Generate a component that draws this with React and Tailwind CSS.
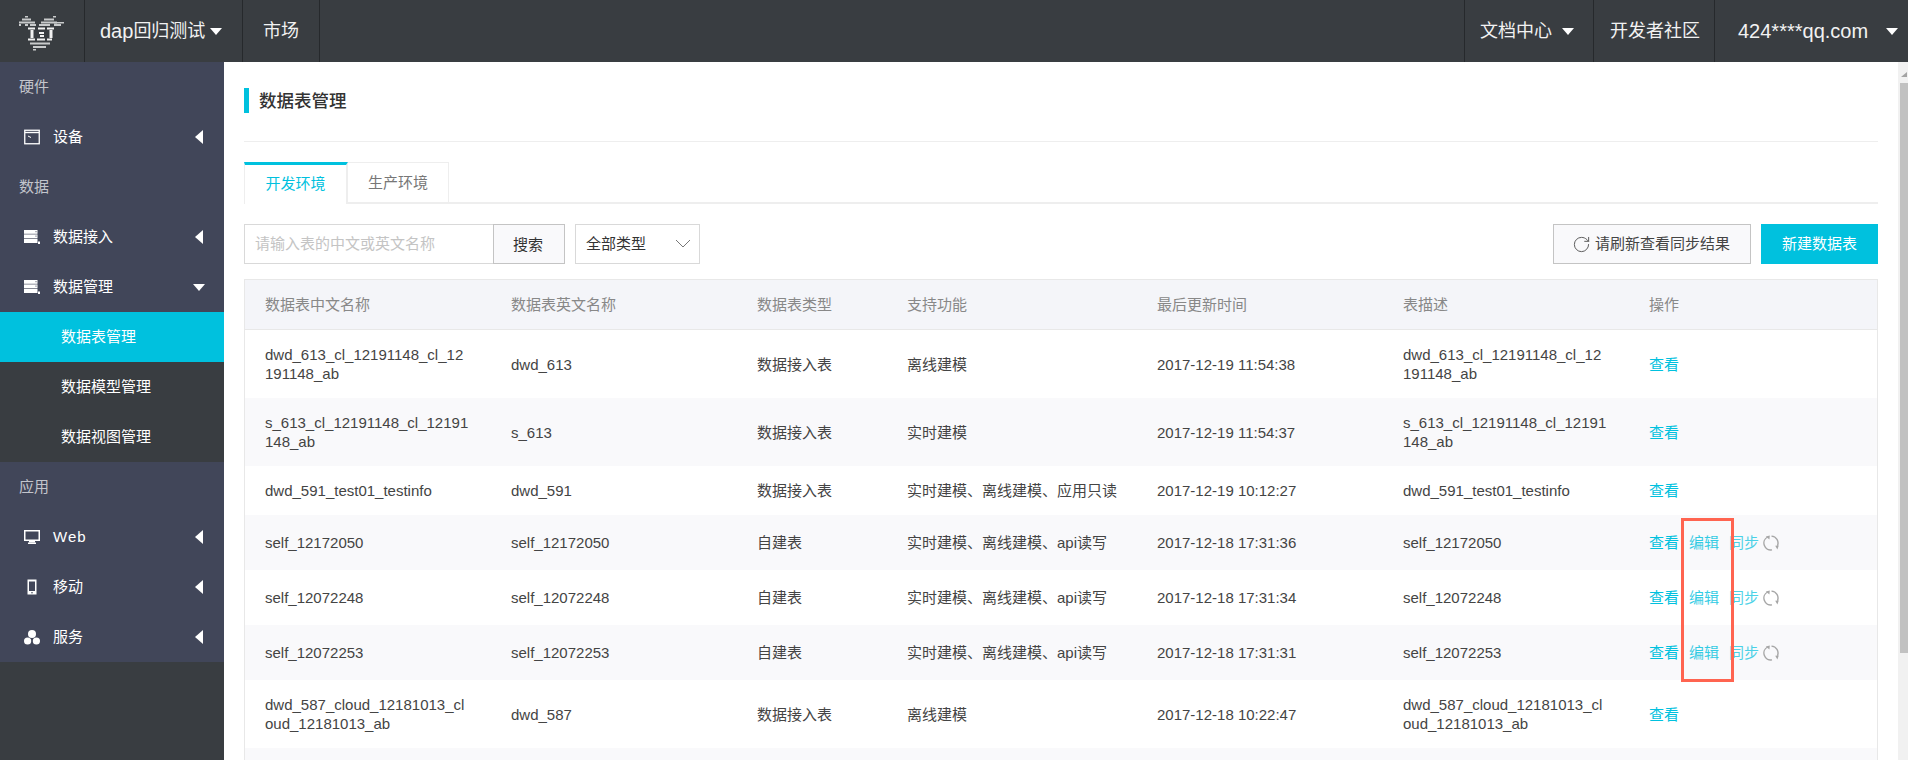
import React from "react";
import { RotateCw } from "lucide-react";

const FONT = "font-['Liberation_Sans','Noto_Sans_CJK_SC',sans-serif]";

const Logo = () => (
  <svg width="64" height="62" viewBox="0 0 64 62" fill="#c9cbcc">
    <rect x="25" y="16" width="3" height="1.5" />
    <rect x="53" y="16" width="3" height="1.5" />
    <rect x="22" y="18.5" width="9" height="2" />
    <rect x="44" y="18.5" width="10" height="2" />
    <rect x="19" y="21.5" width="16" height="2" />
    <rect x="41" y="21.5" width="16" height="2" />
    <rect x="54" y="22" width="10" height="1.5" />
    <rect x="19" y="24" width="2" height="2" />
    <rect x="25" y="24" width="3" height="2" />
    <rect x="30" y="24" width="6" height="2" />
    <rect x="39" y="24" width="11" height="2" />
    <rect x="54" y="24" width="7" height="2" />
    <rect x="28" y="27.5" width="7" height="2" fill="#f2f2f2" />
    <rect x="38" y="27.5" width="7" height="2" fill="#f2f2f2" />
    <rect x="47" y="27.5" width="7" height="2" fill="#f2f2f2" />
    <rect x="30.5" y="30" width="3" height="8" fill="#f2f2f2" />
    <rect x="39" y="32" width="5" height="2" fill="#f2f2f2" />
    <rect x="40" y="35" width="4" height="2" fill="#f2f2f2" />
    <rect x="49.5" y="30" width="3" height="8" fill="#f2f2f2" />
    <rect x="28" y="38.5" width="7" height="2" fill="#f2f2f2" />
    <rect x="37" y="38.5" width="8" height="2" fill="#f2f2f2" />
    <rect x="47" y="38.5" width="5" height="2" fill="#f2f2f2" />
    <rect x="30" y="42.5" width="20" height="2" />
    <rect x="33" y="46" width="13" height="2" />
    <rect x="33" y="49" width="3" height="1.5" />
  </svg>
);

const Caret = ({ className = "" }) => (
  <svg width="12" height="7" viewBox="0 0 12 7" className={className} fill="#fff">
    <polygon points="0,0 12,0 6,7" />
  </svg>
);

const LeftArrow = () => (
  <svg width="8" height="14" viewBox="0 0 8 14" className="absolute left-[195px] top-[18px]" fill="#fff">
    <polygon points="8,0 8,14 0,7" />
  </svg>
);

const WindowIcon = () => (
  <svg width="16" height="16" viewBox="0 0 16 16" fill="none" stroke="#fff">
    <rect x="0.75" y="1.25" width="14.5" height="13.5" strokeWidth="1.3" />
    <line x1="1" y1="3.5" x2="15" y2="3.5" strokeWidth="1.4" />
    <line x1="4" y1="7" x2="7" y2="8.5" strokeWidth="1" />
  </svg>
);

const TableIcon = () => (
  <svg width="16" height="14" viewBox="0 0 16 14" fill="#fff">
    <rect x="0" y="0" width="13.5" height="3.8" />
    <rect x="0" y="4.4" width="13.5" height="3.8" />
    <rect x="0" y="8.8" width="13.5" height="4.2" />
    <rect x="11.5" y="1.2" width="1" height="1" fill="#414659" />
    <rect x="11.5" y="5.6" width="1" height="1" fill="#414659" />
    <rect x="14" y="11.5" width="2" height="2.5" />
  </svg>
);

const MonitorIcon = () => (
  <svg width="16" height="14" viewBox="0 0 16 14" fill="#fff">
    <path fillRule="evenodd" d="M0 0h16v11H0zM1.5 1.5v8h13v-8z" />
    <rect x="5" y="11" width="6" height="1.5" />
    <rect x="4" y="12.5" width="8" height="1.5" />
  </svg>
);

const PhoneIcon = () => (
  <svg width="16" height="16" viewBox="0 0 16 16" fill="#fff">
    <path fillRule="evenodd" d="M3.5 0.5h9v15h-9zM5 2.5v9.5h6V2.5z" />
    <circle cx="8" cy="13.7" r="0.8" fill="#414659" />
  </svg>
);

const ServiceIcon = () => (
  <svg width="16" height="15" viewBox="0 0 16 15" fill="#fff">
    <circle cx="8" cy="4" r="4" />
    <circle cx="3.6" cy="11" r="3.6" />
    <circle cx="12.4" cy="11" r="3.6" />
  </svg>
);

const SyncIcon = () => (
  <svg width="16" height="16" viewBox="0 0 16 16" fill="none" stroke="#a6a6a6" strokeWidth="1.4">
    <path d="M4.6 2A6.9 6.9 0 0 0 9 14.9" />
    <path d="M8.5 1.1A6.9 6.9 0 0 1 14.4 10.8" />
    <polygon points="2.8,1.4 6.8,0.4 6.4,4.4" fill="#a6a6a6" stroke="none" />
    <polygon points="12.2,10.8 15.8,10.4 14.4,14.4" fill="#a6a6a6" stroke="none" />
  </svg>
);

const NavCell = ({ children, className = "" }) => (
  <div className={`h-full flex items-center border-r border-[#26292c] text-[18px] text-[#f2f2f2] ${className}`}>{children}</div>
);

const SectionLabel = ({ children }) => (
  <div className="h-[50px] pl-[19px] flex items-center text-[15px] text-[#c3c5cc]">{children}</div>
);

const MenuItem = ({ icon, label, open }) => (
  <div className="relative h-[50px] flex items-center text-[15px] text-white">
    <div className="w-[53px] pl-[24px] flex items-center">{icon}</div>
    <span>{label}</span>
    {open ? <Caret className="absolute left-[193px] top-[22px]" /> : <LeftArrow />}
  </div>
);

const SubItem = ({ label, active }) => (
  <div className={`h-[50px] pl-[61px] flex items-center text-[15px] text-white ${active ? "bg-[#00c1de]" : ""}`}>{label}</div>
);

const Sidebar = () => (
  <aside className="w-[224px] shrink-0 bg-[#393d41]">
    <div className="bg-[#414659]">
      <SectionLabel>硬件</SectionLabel>
      <MenuItem icon={<WindowIcon />} label="设备" />
      <SectionLabel>数据</SectionLabel>
      <MenuItem icon={<TableIcon />} label="数据接入" />
      <MenuItem icon={<TableIcon />} label="数据管理" open />
    </div>
    <SubItem label="数据表管理" active />
    <SubItem label="数据模型管理" />
    <SubItem label="数据视图管理" />
    <div className="bg-[#414659]">
      <SectionLabel>应用</SectionLabel>
      <MenuItem icon={<MonitorIcon />} label={<span className="tracking-[1px]">Web</span>} />
      <MenuItem icon={<PhoneIcon />} label="移动" />
      <MenuItem icon={<ServiceIcon />} label="服务" />
    </div>
  </aside>
);

const COLS = ["数据表中文名称", "数据表英文名称", "数据表类型", "支持功能", "最后更新时间", "表描述", "操作"];

const ROWS = [
  { h: "h-[68px]", name: "dwd_613_cl_12191148_cl_12191148_ab", en: "dwd_613", type: "数据接入表", fn: "离线建模", time: "2017-12-19 11:54:38", desc: "dwd_613_cl_12191148_cl_12191148_ab" },
  { h: "h-[68px]", name: "s_613_cl_12191148_cl_12191148_ab", en: "s_613", type: "数据接入表", fn: "实时建模", time: "2017-12-19 11:54:37", desc: "s_613_cl_12191148_cl_12191148_ab" },
  { h: "h-[49px]", name: "dwd_591_test01_testinfo", en: "dwd_591", type: "数据接入表", fn: "实时建模、离线建模、应用只读", time: "2017-12-19 10:12:27", desc: "dwd_591_test01_testinfo" },
  { h: "h-[55px]", name: "self_12172050", en: "self_12172050", type: "自建表", fn: "实时建模、离线建模、api读写", time: "2017-12-18 17:31:36", desc: "self_12172050", edit: true },
  { h: "h-[55px]", name: "self_12072248", en: "self_12072248", type: "自建表", fn: "实时建模、离线建模、api读写", time: "2017-12-18 17:31:34", desc: "self_12072248", edit: true },
  { h: "h-[55px]", name: "self_12072253", en: "self_12072253", type: "自建表", fn: "实时建模、离线建模、api读写", time: "2017-12-18 17:31:31", desc: "self_12072253", edit: true },
  { h: "h-[68px]", name: "dwd_587_cloud_12181013_cloud_12181013_ab", en: "dwd_587", type: "数据接入表", fn: "离线建模", time: "2017-12-18 10:22:47", desc: "dwd_587_cloud_12181013_cloud_12181013_ab" },
  { h: "h-[68px]", name: "", en: "", type: "", fn: "", time: "", desc: "", empty: true },
];

const GRID = "grid grid-cols-[246px_246px_150px_250px_246px_246px_1fr] items-center";

const Actions = ({ row }) => {
  if (row.empty) return null;
  return (
    <div className="flex items-center text-[#00c1de]">
      <span>查看</span>
      {row.edit && (
        <>
          <span className="ml-[10px] opacity-80">编辑</span>
          <span className="ml-[10px] opacity-70">同步</span>
          <span className="ml-[4px]"><SyncIcon /></span>
        </>
      )}
    </div>
  );
};

const DataTable = () => (
  <div className="border-x border-[#e8e8e8] text-[15px] leading-[19px]">
    <div className={`${GRID} h-[51px] bg-[#f4f5f9] border-y border-[#e8e8e8] text-[#888] pl-[20px]`}>
      {COLS.map((c) => (
        <div key={c}>{c}</div>
      ))}
    </div>
    {ROWS.map((r, i) => (
      <div key={i} className={`${GRID} ${r.h} pl-[20px] text-[#444] ${i % 2 === 1 ? "bg-[#f9f9fb]" : "bg-white"}`}>
        <div className="w-[205px] break-all">{r.name}</div>
        <div>{r.en}</div>
        <div>{r.type}</div>
        <div>{r.fn}</div>
        <div>{r.time}</div>
        <div className="w-[205px] break-all">{r.desc}</div>
        <Actions row={r} />
      </div>
    ))}
  </div>
);

const Toolbar = () => (
  <div className="mt-[20px] flex h-[40px] text-[15px]">
    <div className="w-[249px] border border-r-0 border-[#d9d9d9] pl-[10px] flex items-center text-[#c4c4c4]">请输入表的中文或英文名称</div>
    <div className="w-[72px] border border-[#c4c4c4] bg-[#f9f9fb] flex items-center justify-center text-[#333] pt-[2px] pr-[2px]">搜索</div>
    <div className="relative ml-[10px] w-[125px] border border-[#d9d9d9] pl-[10px] flex items-center text-[#333]">
      全部类型
      <svg width="16" height="9" viewBox="0 0 16 9" className="absolute right-[8px] top-[14px]" fill="none" stroke="#777" strokeWidth="1">
        <path d="M1 1l7 7 7-7" />
      </svg>
    </div>
    <div className="ml-auto w-[198px] border border-[#c4c4c4] bg-[#f9f9fb] flex items-center justify-center text-[#444]">
      <RotateCw size={19} strokeWidth={1.2} className="mr-[4px] -ml-[2px] text-[#555]" />
      请刷新查看同步结果
    </div>
    <div className="ml-[10px] w-[117px] bg-[#00c1de] flex items-center justify-center text-white">新建数据表</div>
  </div>
);

const Main = () => (
  <main className="relative flex-1 min-w-0 px-[20px]">
    <div className="h-[80px] pt-[26px] border-b border-[#eeeeee]">
      <div className="h-[25px] border-l-[5px] border-[#00c1de] pl-[10px] pt-[2px] flex items-center text-[17.5px] font-medium text-[#333]">数据表管理</div>
    </div>
    <div className="mt-[20px] h-[42px] flex border-b-2 border-[#eeeeee] text-[15px]">
      <div className="w-[104px] h-[42px] border-t-[3px] border-t-[#00c1de] border-r-2 border-r-[#eeeeee] border-l border-l-[#eeeeee] bg-white flex items-center justify-center text-[#00c1de]">开发环境</div>
      <div className="w-[101px] h-[41px] border-t border-r border-[#eeeeee] flex items-center justify-center text-[#777]">生产环境</div>
    </div>
    <Toolbar />
    <div className="mt-[15px]">
      <DataTable />
    </div>
    {/* red annotation drawn over the screenshot */}
    <div className="absolute left-[1457px] top-[456px] w-[53px] h-[164px] border-[3px] border-[#ff6450]" />
  </main>
);

const Scrollbar = () => (
  <div className="relative w-[10px] shrink-0 bg-[#f1f1f1]">
    <svg width="6" height="5" viewBox="0 0 6 5" className="absolute left-[3px] top-[10px]" fill="#a3a3a3">
      <polygon points="6,0 6,5 0,5" />
    </svg>
    <div className="absolute left-[2px] top-[21px] w-[8px] h-[570px] bg-[#c1c1c1]" />
  </div>
);

export default function App() {
  return (
    <div className={`${FONT} w-[1908px] h-[760px] overflow-hidden bg-white flex flex-col`}>
      <header className="h-[62px] shrink-0 bg-[#393d41] flex items-center">
        <NavCell className="w-[85px]"><Logo /></NavCell>
        <NavCell className="w-[158px] pl-[15px]">
          <span className="text-[20px]">dap</span>回归测试
          <Caret className="ml-[5px]" />
        </NavCell>
        <NavCell className="w-[77px] pl-[20px]">市场</NavCell>
        <div className="ml-auto h-full flex">
          <NavCell className="w-[130px] pl-[15px] border-l">
            文档中心
            <Caret className="ml-[10px]" />
          </NavCell>
          <NavCell className="w-[121px] pl-[16px]">开发者社区</NavCell>
          <div className="w-[193px] pl-[23px] flex items-center text-[20px] text-[#f2f2f2]">
            424****qq.com
            <Caret className="ml-[18px]" />
          </div>
        </div>
      </header>
      <div className="flex flex-1 min-h-0">
        <Sidebar />
        <Main />
        <Scrollbar />
      </div>
    </div>
  );
}
